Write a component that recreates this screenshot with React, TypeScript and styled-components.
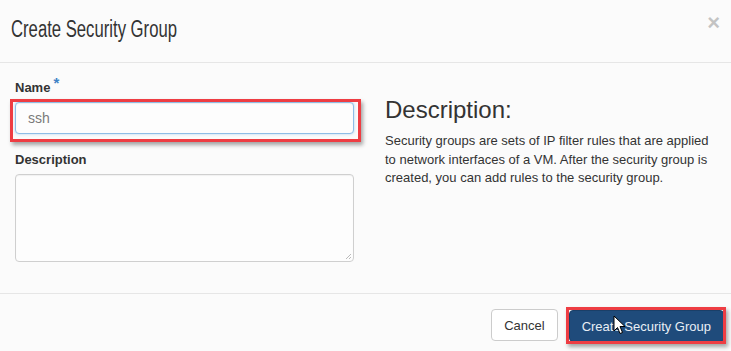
import React from "react";
import styled, { createGlobalStyle } from "styled-components";

const Global = createGlobalStyle`
  html, body { margin: 0; padding: 0; background: #fbfbfb; }
  body { font-family: "Liberation Sans", Arial, sans-serif; color: #333; }
  * { box-sizing: border-box; }
`;

const Modal = styled.div`
  width: 731px;
  height: 351px;
  background: #fbfbfb;
  display: flex;
  flex-direction: column;
  position: relative;
  overflow: hidden;
`;

const Header = styled.div`
  height: 63px;
  border-bottom: 1px solid #e6e6e6;
  display: flex;
  justify-content: space-between;
  align-items: flex-start;
  padding: 0 11px 0 11px;
`;

const Title = styled.h4`
  margin: 14px 0 0 0;
  font-family: "Liberation Sans", Arial, sans-serif;
  font-weight: 400;
  font-size: 23.5px;
  line-height: 30px;
  color: #333;
  transform: scaleX(0.71);
  transform-origin: left center;
  white-space: nowrap;
`;

const Close = styled.span`
  margin-top: 12px;
  font-size: 22px;
  font-weight: 700;
  line-height: 22px;
  color: #000;
  opacity: 0.22;
`;

const Body = styled.div`
  flex: 1;
  display: flex;
  gap: 31px;
  padding: 16px 0 0 15px;
`;

const Left = styled.div`
  width: 339px;
  flex-shrink: 0;
  display: flex;
  flex-direction: column;
`;

const Label = styled.label`
  font-size: 13px;
  line-height: 18px;
  font-weight: 700;
  color: #333;
  margin-bottom: 5px;
`;

const Required = styled.span`
  color: #3f83c6;
  font-size: 15px;
  line-height: 0;
  position: relative;
  top: -4px;
  margin-left: 3px;
`;

const FieldWrap = styled.div`
  position: relative;
  margin-bottom: 17px;
`;

const Input = styled.div`
  height: 32px;
  border: 1px solid #8fbde6;
  border-radius: 4px;
  background: #fdfdfd;
  box-shadow: inset 0 1px 1px rgba(0, 0, 0, 0.06), 0 0 3px rgba(102, 175, 233, 0.5);
  padding: 0 12px;
  display: flex;
  align-items: center;
  font-size: 14px;
  color: #7a7a7a;
`;

const Highlight = styled.div<{ $t: number; $r: number; $b: number; $l: number }>`
  position: absolute;
  top: ${(p) => p.$t}px;
  right: ${(p) => p.$r}px;
  bottom: ${(p) => p.$b}px;
  left: ${(p) => p.$l}px;
  border: 3px solid #ee3d43;
  box-shadow: 2px 3px 4px rgba(0, 0, 0, 0.35);
  pointer-events: none;
`;

const TextArea = styled.div`
  height: 88px;
  border: 1px solid #cfcfcf;
  border-radius: 4px;
  background: #fdfdfd;
  box-shadow: inset 0 1px 1px rgba(0, 0, 0, 0.05);
  position: relative;
`;

const Grip = styled.svg`
  position: absolute;
  right: 1px;
  bottom: 1px;
`;

const Right = styled.div`
  flex: 1;
  display: flex;
  flex-direction: column;
`;

const H3 = styled.h3`
  margin: 17px 0 8px 0;
  font-size: 24px;
  line-height: 28px;
  font-weight: 400;
  color: #333;
`;

const Para = styled.p`
  margin: 0;
  font-size: 13px;
  line-height: 18.7px;
  color: #333;
  width: 333px;
`;

const Footer = styled.div`
  height: 58px;
  border-top: 1px solid #e6e6e6;
  display: flex;
  justify-content: flex-end;
  align-items: flex-start;
  gap: 11px;
  padding: 15px 7px 0 0;
`;

const Button = styled.button<{ $primary?: boolean }>`
  position: relative;
  height: 32px;
  padding: 0 12px;
  font-family: "Liberation Sans", Arial, sans-serif;
  font-size: 13px;
  border-radius: 4px;
  border: 1px solid ${(p) => (p.$primary ? "#1a3f68" : "#cccccc")};
  background: ${(p) => (p.$primary ? "#1f4b7b" : "#ffffff")};
  color: ${(p) => (p.$primary ? "#e8eef5" : "#333")};
  margin-top: ${(p) => (p.$primary ? "1px" : "0")};
`;

const Cursor = styled.svg`
  position: absolute;
  left: 613px;
  top: 315px;
`;

export default function App() {
  return (
    <>
      <Global />
      <Modal>
        <Header>
          <Title>Create Security Group</Title>
          <Close>×</Close>
        </Header>
        <Body>
          <Left>
            <Label>
              Name<Required>*</Required>
            </Label>
            <FieldWrap>
              <Input>ssh</Input>
              <Highlight $t={-3} $r={-7} $b={-8} $l={-5} />
            </FieldWrap>
            <Label>Description</Label>
            <TextArea>
              <Grip width="8" height="8" viewBox="0 0 8 8">
                <path d="M7 2 L2 7 M7 5 L5 7" stroke="#bbb" strokeWidth="1" />
              </Grip>
            </TextArea>
          </Left>
          <Right>
            <H3>Description:</H3>
            <Para>
              Security groups are sets of IP filter rules that are applied to network interfaces of a VM. After the
              security group is created, you can add rules to the security group.
            </Para>
          </Right>
        </Body>
        <Footer>
          <Button>Cancel</Button>
          <Button $primary>
            Create Security Group
            <Highlight $t={-4} $r={-3} $b={-3} $l={-4} />
          </Button>
        </Footer>
        <Cursor width="14" height="20" viewBox="0 0 14 20">
          <path d="M1 1 L1 16 L4.5 12.5 L7 18.5 L9.5 17.5 L7 11.5 L12 11.5 Z" fill="#fff" stroke="#000" strokeWidth="1" strokeLinejoin="round" />
        </Cursor>
      </Modal>
    </>
  );
}
